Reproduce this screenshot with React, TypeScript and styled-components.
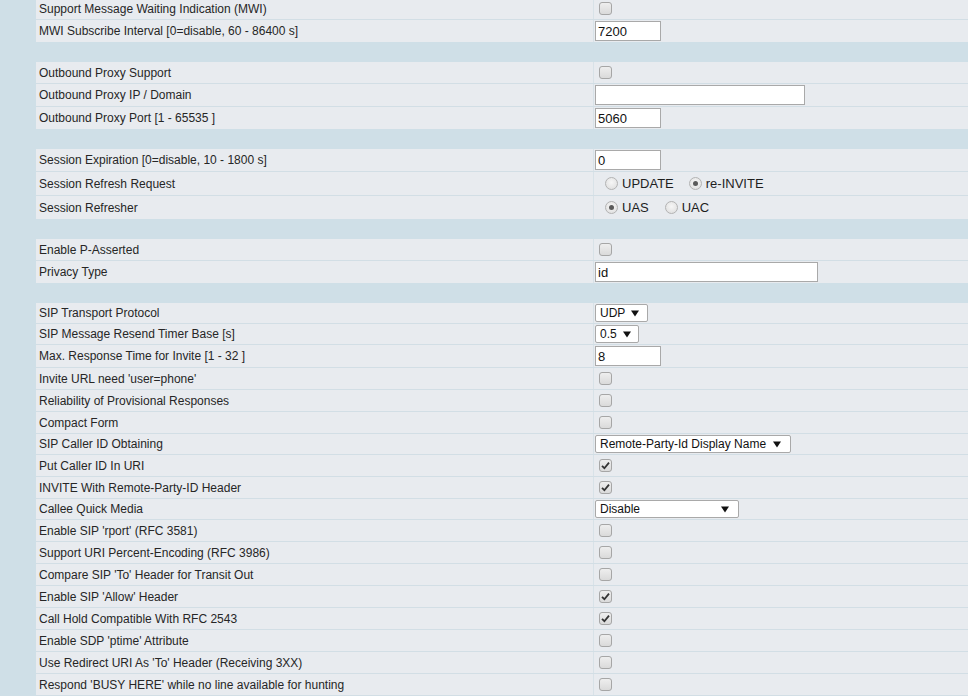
import React from "react";
import styled, { createGlobalStyle } from "styled-components";

type Field =
  | { kind: "check"; label: string; checked?: boolean }
  | { kind: "text"; label: string; value: string; width: number }
  | { kind: "radio"; label: string; options: string[]; selected: number; gap: number[] }
  | { kind: "select"; label: string; value: string; width: number }
  | { kind: "sep" };

const fields: Field[] = [
  { kind: "check", label: "Support Message Waiting Indication (MWI)" },
  { kind: "text", label: "MWI Subscribe Interval [0=disable, 60 - 86400 s]", value: "7200", width: 66 },
  { kind: "sep" },
  { kind: "check", label: "Outbound Proxy Support" },
  { kind: "text", label: "Outbound Proxy IP / Domain", value: "", width: 210 },
  { kind: "text", label: "Outbound Proxy Port [1 - 65535 ]", value: "5060", width: 66 },
  { kind: "sep" },
  { kind: "text", label: "Session Expiration [0=disable, 10 - 1800 s]", value: "0", width: 66 },
  { kind: "radio", label: "Session Refresh Request", options: ["UPDATE", "re-INVITE"], selected: 1, gap: [15] },
  { kind: "radio", label: "Session Refresher", options: ["UAS", "UAC"], selected: 0, gap: [16] },
  { kind: "sep" },
  { kind: "check", label: "Enable P-Asserted" },
  { kind: "text", label: "Privacy Type", value: "id", width: 223 },
  { kind: "sep" },
  { kind: "select", label: "SIP Transport Protocol", value: "UDP", width: 53 },
  { kind: "select", label: "SIP Message Resend Timer Base [s]", value: "0.5", width: 44 },
  { kind: "text", label: "Max. Response Time for Invite [1 - 32 ]", value: "8", width: 66 },
  { kind: "check", label: "Invite URL need 'user=phone'" },
  { kind: "check", label: "Reliability of Provisional Responses" },
  { kind: "check", label: "Compact Form" },
  { kind: "select", label: "SIP Caller ID Obtaining", value: "Remote-Party-Id Display Name", width: 196 },
  { kind: "check", label: "Put Caller ID In URI", checked: true },
  { kind: "check", label: "INVITE With Remote-Party-ID Header", checked: true },
  { kind: "select", label: "Callee Quick Media", value: "Disable", width: 144 },
  { kind: "check", label: "Enable SIP 'rport' (RFC 3581)" },
  { kind: "check", label: "Support URI Percent-Encoding (RFC 3986)" },
  { kind: "check", label: "Compare SIP 'To' Header for Transit Out" },
  { kind: "check", label: "Enable SIP 'Allow' Header", checked: true },
  { kind: "check", label: "Call Hold Compatible With RFC 2543", checked: true },
  { kind: "check", label: "Enable SDP 'ptime' Attribute" },
  { kind: "check", label: "Use Redirect URI As 'To' Header (Receiving 3XX)" },
  { kind: "check", label: "Respond 'BUSY HERE' while no line available for hunting" },
];

const GlobalStyle = createGlobalStyle`
  html, body {
    margin: 0;
    padding: 0;
    background: #cfdfe7;
    overflow: hidden;
  }
  body {
    font-family: "Liberation Sans", Arial, sans-serif;
    font-size: 12px;
    color: #262626;
  }
`;

const Page = styled.div`
  padding-left: 36px;
  margin-top: -2px;
`;

const Table = styled.div`
  display: flex;
  flex-direction: column;
`;

const Row = styled.div<{ $h: number }>`
  display: grid;
  grid-template-columns: 557px 1px 1fr;
  height: ${(p) => p.$h}px;
  background: #e8ebef;
  border-bottom: 1px solid #d2dee5;
`;

// the separator band hides the last row's bottom line
const Separator = styled.div`
  height: 20px;
  margin-top: -1px;
  background: #cfdfe7;
`;

const Label = styled.div`
  display: flex;
  align-items: center;
  padding-left: 3px;
  white-space: nowrap;
`;

const Divider = styled.div`
  background: #d8e2e8;
`;

const Value = styled.div<{ $pad: number }>`
  display: flex;
  align-items: center;
  padding-left: ${(p) => p.$pad}px;
`;

const Box = styled.span`
  width: 11px;
  height: 11px;
  border: 1px solid #a6a6a6;
  border-radius: 3px;
  background: linear-gradient(#eeeeee, #dadada);
  display: inline-flex;
  align-items: center;
  justify-content: center;
`;

const TextInput = styled.div<{ $w: number }>`
  box-sizing: border-box;
  width: ${(p) => p.$w}px;
  height: 20px;
  background: #fff;
  border: 1px solid #a9a9a9;
  padding: 0 2px;
  display: flex;
  align-items: center;
  font-size: 13px;
  color: #111;
`;

const SelectBox = styled.div<{ $w: number }>`
  box-sizing: border-box;
  width: ${(p) => p.$w}px;
  height: 18px;
  background: #fff;
  border: 1px solid #a9a9a9;
  border-radius: 2px;
  padding: 0 9px 0 4px;
  display: flex;
  align-items: center;
  justify-content: space-between;
  gap: 6px;
  font-size: 12px;
  color: #111;
  white-space: nowrap;
  svg {
    flex-shrink: 0;
  }
`;

const RadioGroup = styled.div`
  display: flex;
  align-items: center;
`;

const RadioItem = styled.label<{ $gap: number }>`
  display: flex;
  align-items: center;
  gap: 4px;
  margin-right: ${(p) => p.$gap}px;
  font-size: 13px;
  color: #1e1e1e;
`;

const Circle = styled.span<{ $on: boolean }>`
  width: 11px;
  height: 11px;
  border: 1px solid #b3b3b3;
  border-radius: 50%;
  background: radial-gradient(circle at 50% 40%, #f6f6f6, #dcdcdc);
  display: inline-flex;
  align-items: center;
  justify-content: center;
  &::after {
    content: "";
    display: ${(p) => (p.$on ? "block" : "none")};
    width: 5px;
    height: 5px;
    border-radius: 50%;
    background: #5a5a5a;
  }
`;

const Check = ({ checked }: { checked?: boolean }) => (
  <Box>
    {checked && (
      <svg width="9" height="9" viewBox="0 0 9 9">
        <path d="M1 4.8 L3.4 7.2 L8 1.6" stroke="#333" strokeWidth="1.8" fill="none" />
      </svg>
    )}
  </Box>
);

const Arrow = () => (
  <svg width="8" height="7" viewBox="0 0 8 7">
    <path d="M0 0.5 H8 L4 6.5 Z" fill="#111" />
  </svg>
);

const renderValue = (f: Field) => {
  switch (f.kind) {
    case "check":
      return (
        <Value $pad={5}>
          <Check checked={f.checked} />
        </Value>
      );
    case "text":
      return (
        <Value $pad={1}>
          <TextInput $w={f.width}>{f.value}</TextInput>
        </Value>
      );
    case "select":
      return (
        <Value $pad={1}>
          <SelectBox $w={f.width}>
            <span>{f.value}</span>
            <Arrow />
          </SelectBox>
        </Value>
      );
    case "radio":
      return (
        <Value $pad={11}>
          <RadioGroup>
            {f.options.map((o, i) => (
              <RadioItem key={o} $gap={f.gap[i] ?? 0}>
                <Circle $on={i === f.selected} />
                {o}
              </RadioItem>
            ))}
          </RadioGroup>
        </Value>
      );
    default:
      return null;
  }
};

const rowHeight = (f: Field) => {
  if (f.kind === "text") return 22;
  if (f.kind === "radio") return 23;
  if (f.kind === "select") return 20;
  return 21;
};

export default function App() {
  return (
    <>
      <GlobalStyle />
      <Page>
        <Table>
          {fields.map((f, i) =>
            f.kind === "sep" ? (
              <Separator key={i} />
            ) : (
              <Row key={i} $h={rowHeight(f)}>
                <Label>{f.label}</Label>
                <Divider />
                {renderValue(f)}
              </Row>
            )
          )}
        </Table>
      </Page>
    </>
  );
}
